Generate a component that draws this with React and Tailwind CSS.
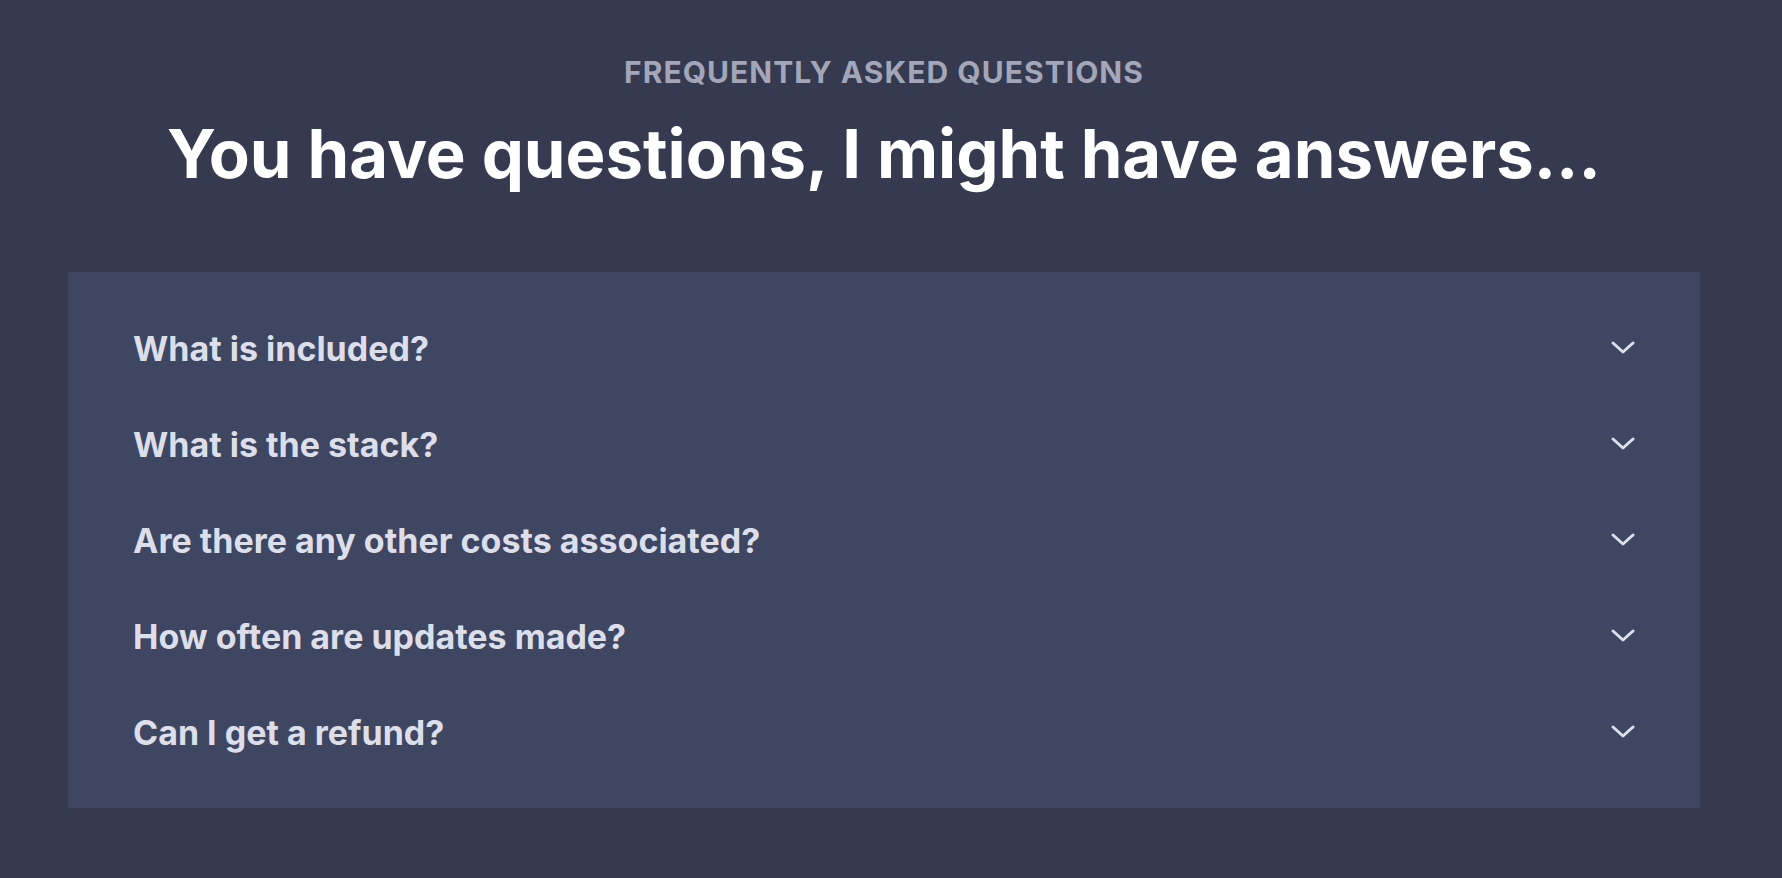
import React from 'react';

const questions = [
  "What is included?",
  "What is the stack?",
  "Are there any other costs associated?",
  "How often are updates made?",
  "Can I get a refund?",
];

function Chevron() {
  return (
    <svg width="24" height="14" viewBox="0 0 24 14" fill="none">
      <polyline points="2,2 12,11 22,2" stroke="#dde0ea" strokeWidth="3" strokeLinecap="round" strokeLinejoin="round" />
    </svg>
  );
}

export default function App() {
  return (
    <div className="min-h-screen bg-[#363a50] pl-[68px] pr-[82px]" style={{ fontFamily: 'Inter, "Noto Sans", sans-serif' }}>
      <div className="flex flex-col items-center pt-[57px]">
        <p className="text-[30px] leading-none font-bold tracking-[0.035em] text-[#a3a6b8] uppercase">Frequently asked questions</p>
        <h1 className="mt-[33px] text-[67px] leading-none font-bold text-white">You have questions, I might have answers...</h1>
      </div>

      <div className="mt-[85px] bg-[#3f4662] px-[65px] py-[28px]">
        {questions.map((q) => (
          <div key={q} className="flex h-[96px] items-center justify-between">
            <span className="text-[34px] font-bold text-[#dcdfea]">{q}</span>
            <Chevron />
          </div>
        ))}
      </div>
    </div>
  );
}
